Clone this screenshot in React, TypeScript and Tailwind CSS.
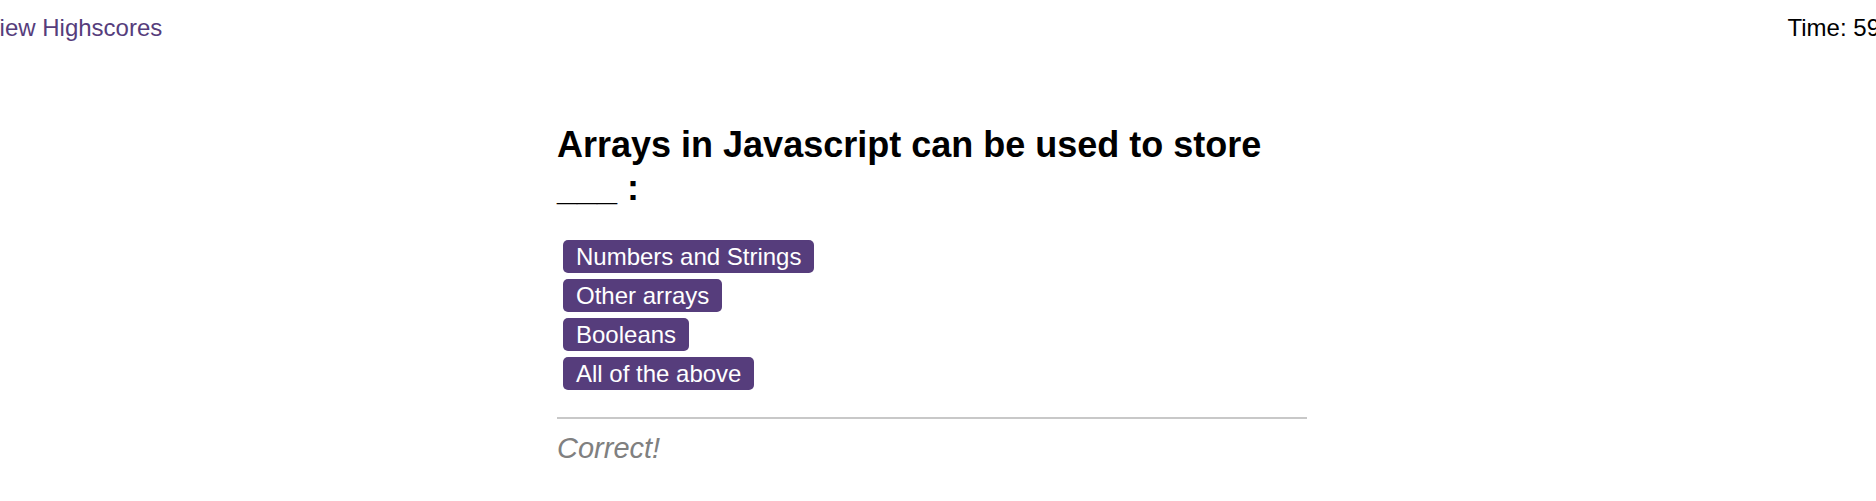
const choices = ['Numbers and Strings', 'Other arrays', 'Booleans', 'All of the above']

export default function App() {
  return (
    <div className="w-full min-h-[501px] overflow-hidden bg-white font-['Liberation_Sans',Arial,sans-serif]">
      {/* page is a bit wider than the window, scrolled 16px to the right */}
      <div className="w-[1896px] -ml-[16px]">
        <header className="flex justify-between pt-[14px] text-[24px] leading-[28px]">
          <a href="#" className="text-[#563d7c]">View Highscores</a>
          <span className="text-black">Time: 59</span>
        </header>

        <main className="w-[750px] mx-auto mt-[81px]">
          <h2 className="text-[36px] leading-[43px] font-bold text-black">
            Arrays in Javascript can be used to store ___ :
          </h2>

          <div className="flex flex-col items-start gap-[6px] mt-[31px] pl-[6px]">
            {choices.map((choice) => (
              <button
                key={choice}
                className="bg-[#563d7c] text-white text-[24px] leading-[29px] px-[13px] py-[2px] rounded-[5px]"
              >
                {choice}
              </button>
            ))}
          </div>

          <hr className="mt-[27px] border-0 h-[2px] bg-[#c8c8c8]" />
          <p className="mt-[13px] text-[29px] leading-[32px] italic text-[#808080]">Correct!</p>
        </main>
      </div>
    </div>
  )
}
